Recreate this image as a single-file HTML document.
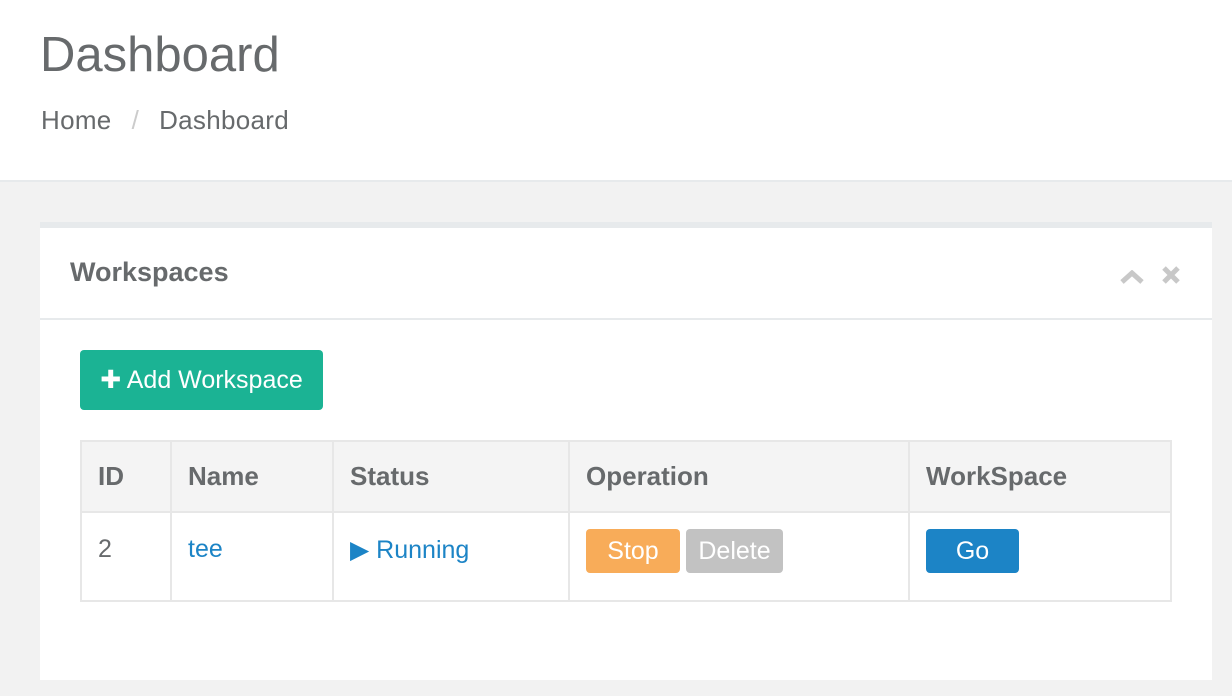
<!DOCTYPE html>
<html><head><style>
*{margin:0;padding:0;box-sizing:border-box}
body{width:1232px;height:696px;background:#f2f2f2;font-family:"Liberation Sans",sans-serif;color:#676a6c;position:relative;overflow:hidden}
.hdr{position:absolute;left:0;top:0;width:1232px;height:182px;background:#fff;border-bottom:2px solid #e7eaec}
h1{position:absolute;left:40px;top:27px;font-size:49px;font-weight:normal;color:#676a6c;letter-spacing:0px}
.bc{position:absolute;left:41px;top:105px;font-size:26px;color:#676a6c;letter-spacing:0.3px}
.bc .s{color:#ccc;margin:0 20px}
.panel{position:absolute;left:40px;top:222px;width:1172px;height:458px;background:#fff;border-top:6px solid #e7eaec}
.ptitle{position:absolute;left:30px;top:29px;font-size:27px;font-weight:bold}
.pline{position:absolute;left:0;top:90px;width:100%;height:2px;background:#e7eaec}
.btn{position:absolute;color:#fff;border-radius:4px;text-align:center}
table{position:absolute;left:40px;top:212px;border-collapse:collapse;font-size:25px}
td,th{border:2px solid #e7e7e7;text-align:left;padding:0 16px;vertical-align:middle}
th{background:#f4f4f4;height:71px;font-weight:bold;font-size:26px}
td{height:89px;vertical-align:top;padding-top:22px}
a{color:#1c84c6}
</style></head><body>
<div class="hdr"><h1>Dashboard</h1><div class="bc">Home<span class="s">/</span>Dashboard</div></div>
<div class="panel">
<div class="ptitle">Workspaces</div>
<svg style="position:absolute;left:1080px;top:42px" width="24" height="16"><path d="M2 12 L12 3 L22 12" stroke="#c8c8c8" stroke-width="5" fill="none"/></svg>
<svg style="position:absolute;left:1122px;top:38px" width="18" height="18"><path d="M2 2L16 16M16 2L2 16" stroke="#c8c8c8" stroke-width="5"/></svg>
<div class="pline"></div>
<div class="btn" style="left:40px;top:122px;width:243px;height:60px;background:#1bb394;font-size:25px;line-height:60px">✚ Add Workspace</div>
<table>
<tr><th style="width:90px">ID</th><th style="width:162px">Name</th><th style="width:236px">Status</th><th style="width:340px">Operation</th><th style="width:262px">WorkSpace</th></tr>
<tr><td>2</td><td><a>tee</a></td><td><a>▶ Running</a></td><td style="position:relative">
<div class="btn" style="left:16px;top:16px;width:94px;height:44px;line-height:44px;background:#f8ac59">Stop</div>
<div class="btn" style="left:116px;top:16px;width:97px;height:44px;line-height:44px;background:#c2c2c2">Delete</div></td>
<td style="position:relative"><div class="btn" style="left:16px;top:16px;width:93px;height:44px;line-height:44px;background:#1c84c6">Go</div></td></tr>
</table>
</div>
</body></html>
